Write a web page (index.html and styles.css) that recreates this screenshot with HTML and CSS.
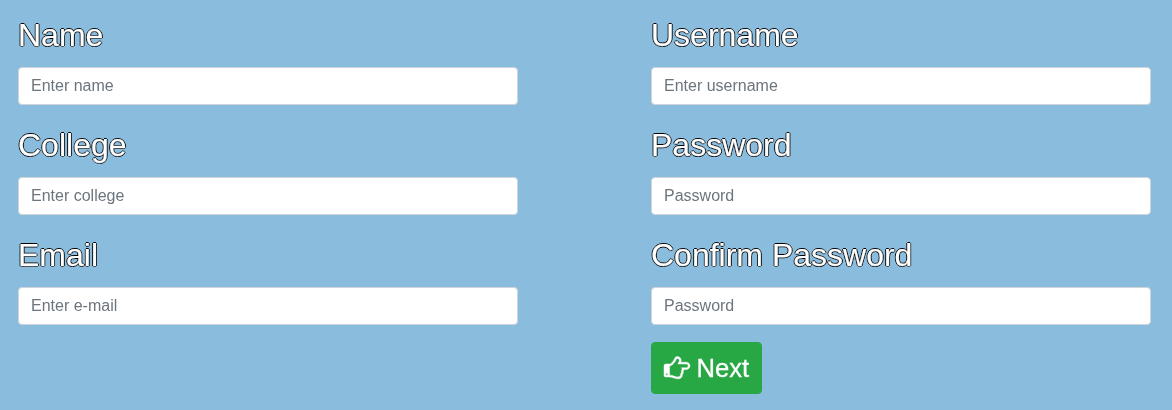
FILE: index.html
```html
<!DOCTYPE html>
<html lang="en">
<head>
<meta charset="utf-8">
<title>Register</title>
<link rel="stylesheet" href="styles.css">
</head>
<body>
<form class="form">
  <div class="column">
    <div class="group"><label class="label" for="name">Name</label><input class="control" id="name" type="text" placeholder="Enter name"></div>
    <div class="group"><label class="label" for="college">College</label><input class="control" id="college" type="text" placeholder="Enter college"></div>
    <div class="group"><label class="label" for="email">Email</label><input class="control" id="email" type="email" placeholder="Enter e-mail"></div>
  </div>
  <div class="column">
    <div class="group"><label class="label" for="username">Username</label><input class="control" id="username" type="text" placeholder="Enter username"></div>
    <div class="group"><label class="label" for="password">Password</label><input class="control" id="password" type="password" placeholder="Password"></div>
    <div class="group"><label class="label" for="confirm">Confirm Password</label><input class="control" id="confirm" type="password" placeholder="Password"></div>
    <button class="next" type="button"><svg class="hand" viewBox="0 -40 1792 1654" aria-hidden="true"><path transform="matrix(1 0 0 -1 0 1536)" d="M256 320q0 26 -19 45t-45 19t-45 -19t-19 -45t19 -45t45 -19t45 19t19 45zM1664 896q0 51 -39 89.500t-89 38.500h-576q0 20 15 48.500t33 55t33 68t15 84.500q0 67 -44.500 97.500t-115.500 30.500q-24 0 -90 -139q-24 -44 -37 -65q-40 -64 -112 -145q-71 -81 -101 -106q-69 -57 -140 -57h-32v-640h32q72 0 167 -32t193.500 -64t179.500 -32q189 0 189 167q0 26 -5 56q30 16 47.500 52.500t17.500 73.500t-18 69q53 50 53 119q0 25 -10 55.500t-25 47.500h331q52 0 90 38t38 90zM1792 897q0 -105 -76 -181t-180 -76h-169q-4 -62 -37 -119q3 -21 3 -43q0 -101 -60 -178q1 -139 -85 -219.500t-227 -80.500q-133 0 -322 69q-164 59 -223 59h-288q-53 0 -90.500 37.500t-37.500 90.500v640q0 53 37.500 90.500t90.500 37.500h288q10 0 21.500 4.500t23.500 14t22.500 18t24 22.500t20.500 21.500t19 21.500t14 17q65 74 100 129q13 21 33 62t37 72t40.500 63t55 49.500t69.500 17.500q125 0 206.500 -67t81.500 -189q0 -68 -22 -128h374q104 0 180 -76t76 -179z"/></svg><span>Next</span></button>
  </div>
</form>
</body>
</html>
```
FILE: styles.css
```css
* { box-sizing: border-box; }
body { margin: 0; min-height: 410px; background: #8abcdd; font-family: "Liberation Sans", Arial, sans-serif; }
.form { display: grid; grid-template-columns: 500px 500px; column-gap: 133px; padding: 11px 0 0 18px; will-change: transform; }
.group { height: 110px; }
.label { display: block; height: 48px; margin-bottom: 8px; font-size: 32px; line-height: 48px; color: #fff; -webkit-text-stroke: 0.25px #fff; text-shadow: -1px 0 #000, 0 1px #000, 1px 0 #000, 0 -1px #000; }
.control { display: block; width: 100%; height: 38px; padding: 6px 12px; border: 1px solid #ced4da; border-radius: 4px; background: #fff; color: #495057; font: 16px/24px "Liberation Sans", Arial, sans-serif; }
.control::placeholder { color: #6c757d; opacity: 1; }
.next { display: flex; align-items: center; gap: 6.5px; width: 111px; height: 52px; margin-top: 1px; padding: 6px 0 6px 12px; border: 1px solid #28a745; border-radius: 4px; background: #28a745; color: #fff; font: 25.6px/38.4px "Liberation Sans", Arial, sans-serif; -webkit-text-stroke: 0.3px #fff; }
.hand { width: 26px; height: 24px; fill: currentColor; stroke: currentColor; stroke-width: 30; flex: none; overflow: visible; }
```
